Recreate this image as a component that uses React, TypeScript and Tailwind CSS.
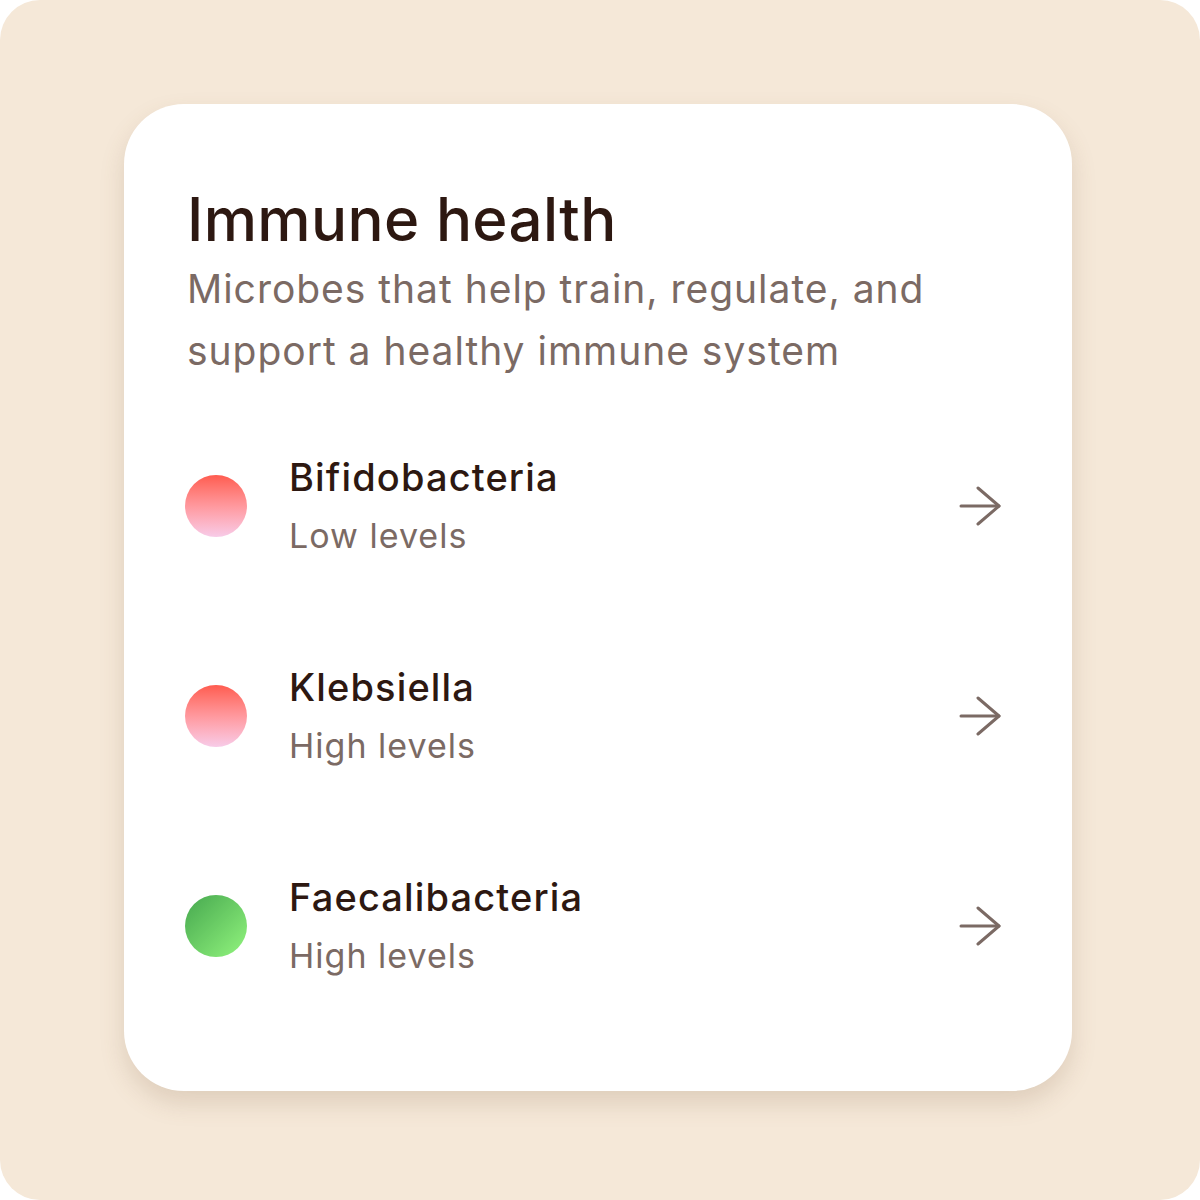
const items = [
  { name: 'Bifidobacteria', level: 'Low levels', dot: 'bg-gradient-to-b from-[#ff5b4f] to-[#f7cbe8]' },
  { name: 'Klebsiella', level: 'High levels', dot: 'bg-gradient-to-b from-[#ff5b4f] to-[#f7cbe8]' },
  { name: 'Faecalibacteria', level: 'High levels', dot: 'bg-gradient-to-br from-[#45a84f] to-[#92f57e]' },
];

const Arrow = () => (
  <svg width="42" height="42" viewBox="0 0 42 42" fill="none" stroke="#7b6a64" strokeWidth="3" strokeLinecap="round" strokeLinejoin="round">
    <path d="M2 21h38" />
    <path d="M19 3l21 18-21 18" />
  </svg>
);

const App = () => {
  return (
    <div className="h-[1200px] w-[1200px] bg-white font-['Inter',sans-serif]">
      <div className="h-full w-full rounded-[40px] bg-[#f5e8d8] pl-[124px] pt-[104px]">
        <div className="h-[987px] w-[948px] rounded-[60px] bg-white px-[63px] pt-[80px] shadow-[0_12px_24px_rgba(120,90,60,0.18)]">
          {/* Header */}
          <h1 className="text-[60px] font-medium leading-[70px] tracking-[0.006em] text-[#2d1811]">
            Immune health
          </h1>
          <p className="mt-[4px] text-[39px] leading-[62px] tracking-[0.025em] text-[#7b6a64]">
            Microbes that help train, regulate, and support a healthy immune system
          </p>

          {/* List */}
          <div className="mt-[69px] flex flex-col gap-[100px] pr-[8px]">
            {items.map((item) => (
              <div key={item.name} className="flex h-[110px] items-center">
                <div className={`-ml-[2px] h-[62px] w-[62px] rounded-full ${item.dot}`} />
                <div className="ml-[42px] flex flex-1 flex-col gap-[15px]">
                  <span className="text-[38px] font-medium leading-[44px] tracking-[0.03em] text-[#2d1811]">{item.name}</span>
                  <span className="text-[34px] leading-[44px] tracking-[0.03em] text-[#7b6a64]">{item.level}</span>
                </div>
                <Arrow />
              </div>
            ))}
          </div>
        </div>
      </div>
    </div>
  );
};

export default App;
